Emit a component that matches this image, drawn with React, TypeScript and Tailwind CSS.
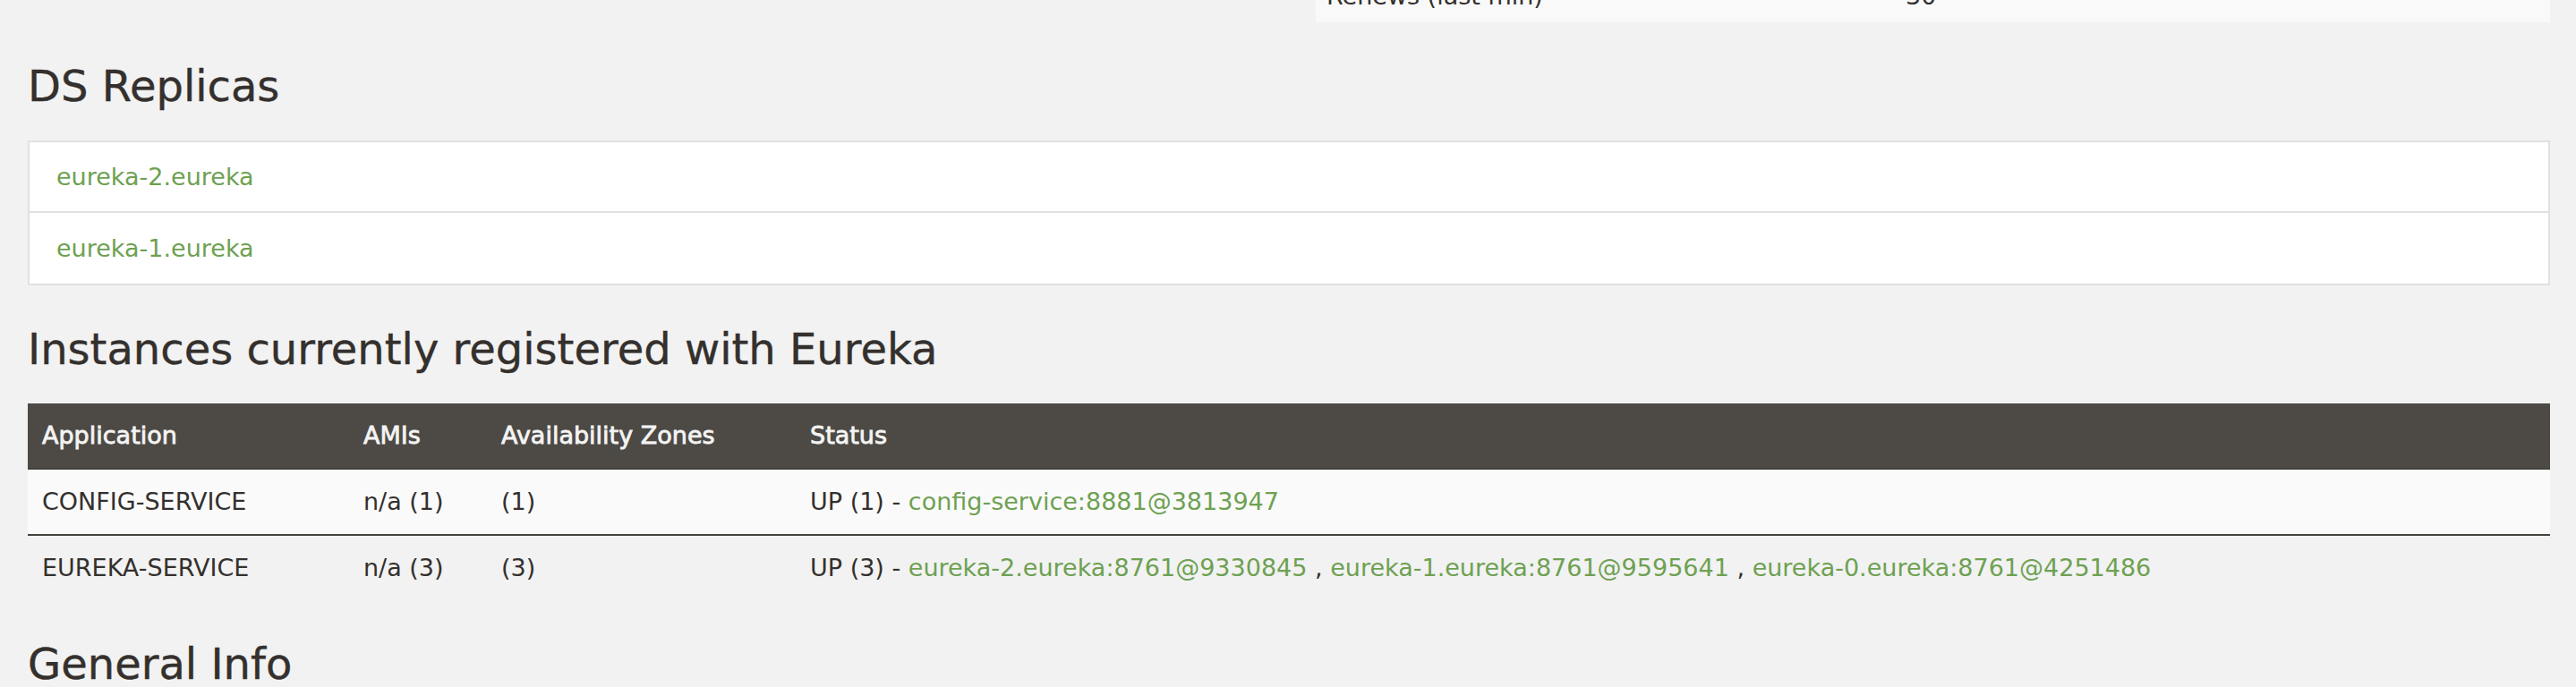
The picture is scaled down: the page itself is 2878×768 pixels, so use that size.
import React from 'react';

interface Instance {
  app: string;
  amis: string;
  zones: string;
  status: string;
  links: string[];
}

const replicas = ['eureka-2.eureka', 'eureka-1.eureka'];

const instances: Instance[] = [
  {
    app: 'CONFIG-SERVICE',
    amis: 'n/a (1)',
    zones: '(1)',
    status: 'UP (1) - ',
    links: ['config-service:8881@3813947'],
  },
  {
    app: 'EUREKA-SERVICE',
    amis: 'n/a (3)',
    zones: '(3)',
    status: 'UP (3) - ',
    links: [
      'eureka-2.eureka:8761@9330845',
      'eureka-1.eureka:8761@9595641',
      'eureka-0.eureka:8761@4251486',
    ],
  },
];

const Heading: React.FC<{ children: React.ReactNode }> = ({ children }) => (
  <h2 className="mt-[45px] mb-[35px] text-[48px] leading-[52px] font-normal text-[#34302d] [-webkit-text-stroke:0.4px_#34302d]">
    {children}
  </h2>
);

const App: React.FC = () => {
  return (
    <div className="min-h-[768px] bg-[#f2f2f2] pl-[31px] pr-[29px] font-['DejaVu_Sans',sans-serif] text-[27px] leading-[36px] text-[#34302d]">
      {/* tail of the system status tables */}
      <div className="grid grid-cols-2 gap-[60px]">
        <div />
        <div className="flex h-[25px] items-end overflow-hidden bg-[#f9f9f9]">
          <div className="grid w-full grid-cols-[647px_1fr] pb-[11px] pl-[12px]">
            <span>Renews (last min)</span>
            <span>30</span>
          </div>
        </div>
      </div>

      <Heading>DS Replicas</Heading>
      <ul className="divide-y-2 divide-[#e1e1e1] border-2 border-[#e1e1e1] bg-white">
        {replicas.map((r) => (
          <li key={r} className="flex h-[79px] items-center px-[30px]">
            <a href="#" className="text-[#6ea152]">{r}</a>
          </li>
        ))}
      </ul>

      <Heading>Instances currently registered with Eureka</Heading>
      <table className="w-full table-fixed border-collapse text-left">
        <thead className="bg-[#4d4a45] text-[#f4f4f4]">
          <tr>
            <th className="w-[359px] px-[16px] py-[18px] font-normal [-webkit-text-stroke:0.8px_#f4f4f4]">Application</th>
            <th className="w-[154px] px-[16px] py-[18px] font-normal [-webkit-text-stroke:0.8px_#f4f4f4]">AMIs</th>
            <th className="w-[345px] px-[16px] py-[18px] font-normal [-webkit-text-stroke:0.8px_#f4f4f4]">Availability Zones</th>
            <th className="px-[16px] py-[18px] font-normal [-webkit-text-stroke:0.8px_#f4f4f4]">Status</th>
          </tr>
        </thead>
        <tbody>
          {instances.map((inst, i) => (
            <tr key={inst.app} className={i % 2 === 0 ? 'bg-[#fafafa]' : ''}>
              <td className="border-t-2 border-[#45423e] px-[16px] py-[18px]">{inst.app}</td>
              <td className="border-t-2 border-[#45423e] px-[16px] py-[18px]">{inst.amis}</td>
              <td className="border-t-2 border-[#45423e] px-[16px] py-[18px]">{inst.zones}</td>
              <td className="whitespace-nowrap border-t-2 border-[#45423e] px-[16px] py-[18px]">
                {inst.status}
                {inst.links.map((l, j) => (
                  <React.Fragment key={l}>
                    {j > 0 && ' , '}
                    <a href="#" className="text-[#6ea152]">{l}</a>
                  </React.Fragment>
                ))}
              </td>
            </tr>
          ))}
        </tbody>
      </table>

      <Heading>General Info</Heading>
    </div>
  );
};

export default App;
